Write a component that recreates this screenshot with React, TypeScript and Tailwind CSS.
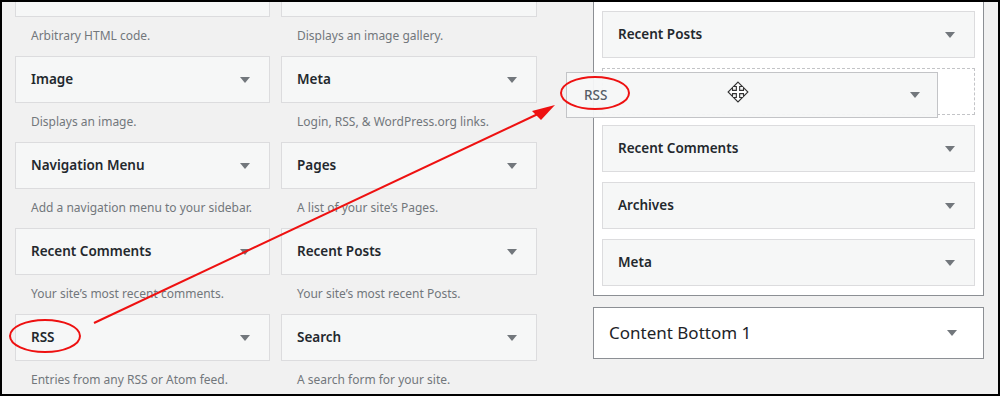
const widgets: [string, string][] = [
  ["", "Arbitrary HTML code."],
  ["", "Displays an image gallery."],
  ["Image", "Displays an image."],
  ["Meta", "Login, RSS, & WordPress.org links."],
  ["Navigation Menu", "Add a navigation menu to your sidebar."],
  ["Pages", "A list of your site’s Pages."],
  ["Recent Comments", "Your site’s most recent comments."],
  ["Recent Posts", "Your site’s most recent Posts."],
  ["RSS", "Entries from any RSS or Atom feed."],
  ["Search", "A search form for your site."],
];

const sidebar = ["Recent Posts", null, "Recent Comments", "Archives", "Meta"];

function Caret({ className = "" }: { className?: string }) {
  return (
    <svg width="10" height="6" viewBox="0 0 10 6" className={className}>
      <path d="M0 0 H10 L5 6 Z" fill="#72777c" />
    </svg>
  );
}

function MoveCursor() {
  return (
    <svg width="22" height="22" viewBox="0 0 20 20" className="absolute left-[160px] top-[8px]">
      <path
        d="M10 1 L14 5 L11.5 5 L11.5 8.5 L15 8.5 L15 6 L19 10 L15 14 L15 11.5 L11.5 11.5 L11.5 15 L14 15 L10 19 L6 15 L8.5 15 L8.5 11.5 L5 11.5 L5 14 L1 10 L5 6 L5 8.5 L8.5 8.5 L8.5 5 L6 5 Z"
        fill="#ffffff"
        stroke="#333"
        strokeWidth="1"
      />
    </svg>
  );
}

function WidgetCard({ title }: { title: string }) {
  return (
    <div className="h-[47px] border border-[#dcdcde] bg-[#f6f7f7] flex items-center justify-between pl-[15px] pr-[19px]">
      <span className="text-[13.5px] font-semibold text-[#23282d]">{title}</span>
      <Caret />
    </div>
  );
}

export default function App() {
  return (
    <div
      className="relative w-[1000px] h-[396px] overflow-hidden bg-[#f1f1f1] border-2 border-black"
      style={{ fontFamily: '"Noto Sans", "Open Sans", sans-serif' }}
    >
      <div className="flex">
        {/* available widgets */}
        <div className="grid grid-cols-[255px_256px] gap-x-[11px] ml-[13px] mt-[-32px] w-[522px]">
          {widgets.map(([title, desc], i) => (
            <div key={i} className="h-[86px]">
              <WidgetCard title={title} />
              <p className="pl-[16px] pt-[10px] text-[12px] text-[#72777c]">{desc}</p>
            </div>
          ))}
        </div>

        {/* sidebar area */}
        <div className="ml-[56px] w-[391px] flex flex-col mt-[-2px]">
          <div className="bg-white border border-[#8c8f94] border-t-0 px-[8px] pt-[11px] pb-[9px] flex flex-col gap-[10px]">
            {sidebar.map((s, i) =>
              s ? (
                <WidgetCard key={i} title={s} />
              ) : (
                <div key={i} className="h-[47px] border border-dashed border-[#c3c4c7]" />
              ),
            )}
          </div>
          <div className="mt-[11px] h-[52px] bg-white border border-[#8c8f94] flex items-center justify-between pl-[15px] pr-[26px]">
            <span className="text-[17px] font-normal text-[#1d2327]">Content Bottom 1</span>
            <Caret />
          </div>
        </div>
      </div>

      {/* dragged helper */}
      <div className="absolute left-[564px] top-[70px] w-[372px] h-[46px] border border-[#c3c4c7] bg-[#f6f7f7]/95 flex items-center justify-between pl-[17px] pr-[17px]">
        <span className="text-[13.5px] font-medium text-[#555d66]">RSS</span>
        <Caret />
        <MoveCursor />
      </div>

      {/* annotations */}
      <svg className="absolute left-[-2px] top-[-2px]" width="1000" height="396" viewBox="0 0 1000 396">
        <ellipse cx="45" cy="336" rx="35" ry="16" fill="none" stroke="#ee1111" strokeWidth="2" />
        <ellipse cx="595" cy="93" rx="34" ry="16" fill="none" stroke="#ee1111" strokeWidth="2" />
        <line x1="94" y1="323" x2="540" y2="113" stroke="#ee1111" strokeWidth="2" />
        <path d="M555 105 L532 111 L541 120 Z" fill="#ee1111" />
      </svg>
    </div>
  );
}
